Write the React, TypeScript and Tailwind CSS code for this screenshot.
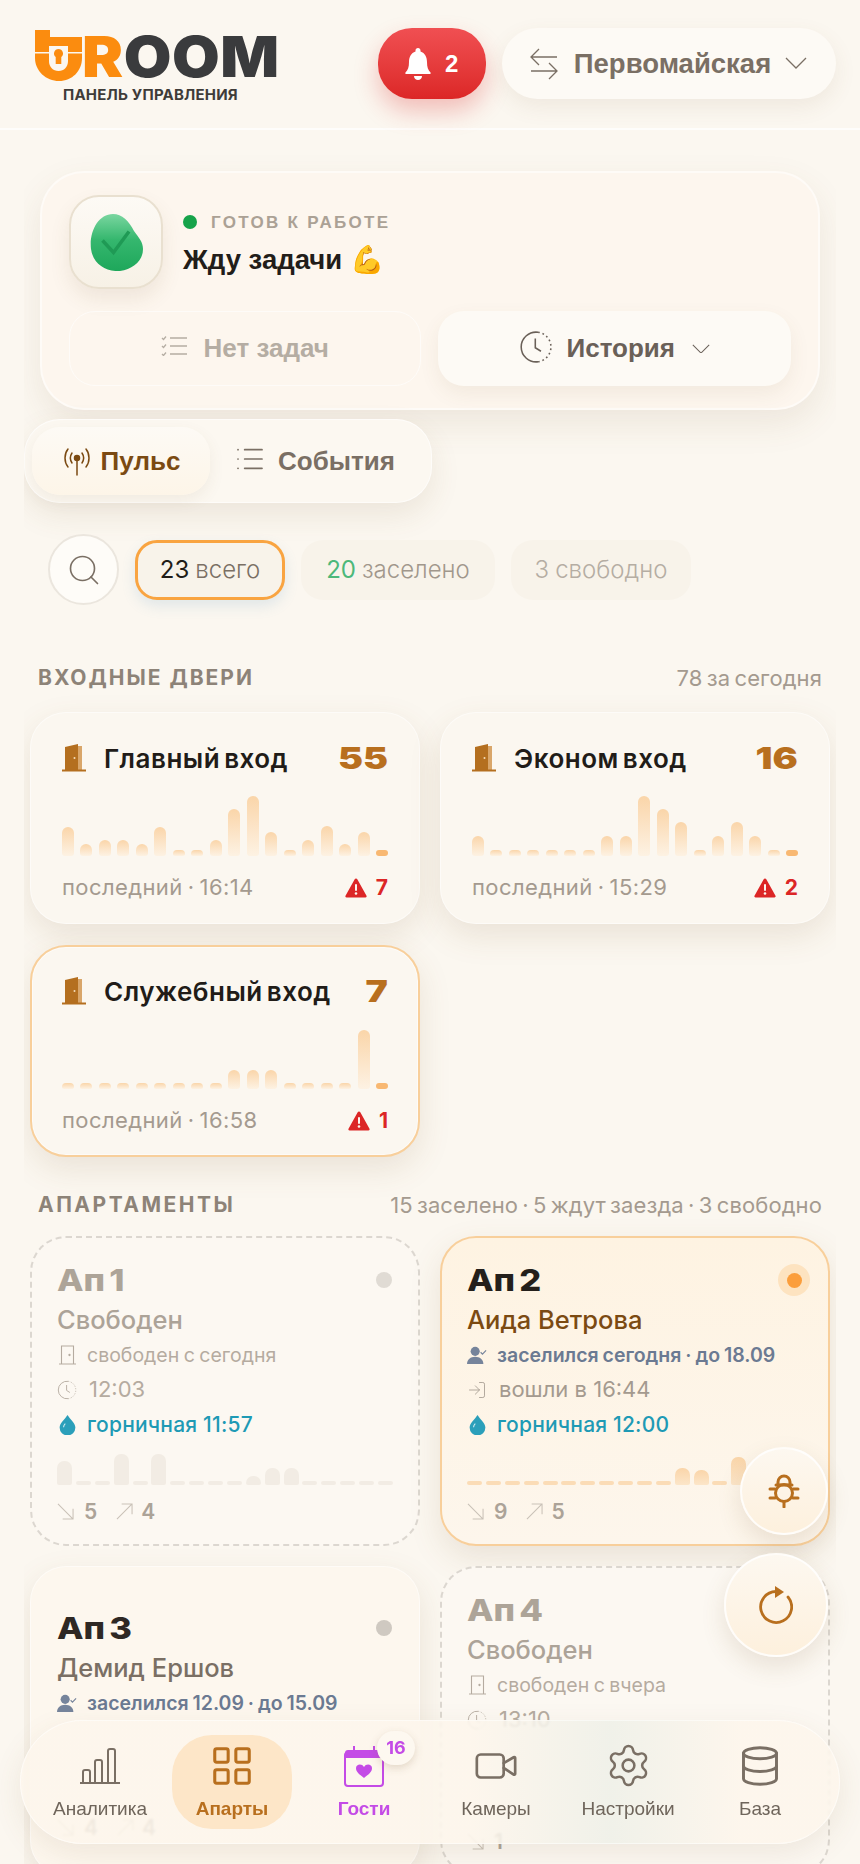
import { ReactNode } from 'react'
import { Database, LayoutGrid, List, LogIn, Search, Settings, Video } from 'lucide-react'

const CARD_SHADOW = 'shadow-[0_12px_32px_rgba(120,90,50,0.13),inset_0_0_0_1px_rgba(255,255,255,0.5)]'

function Logo() {
  return (
    <div className="flex flex-col">
      <div className="flex h-[52px] items-end">
        <svg width="47" height="51" viewBox="0 0 47 51" className="shrink-0">
          <path d="M0 0h15v7h32v15H0z" fill="#fb8c0f" />
          <path d="M0 23.500h47v4.500c0 13-10 23-23 23S0 41 0 28z" fill="#fb8c0f" />
          <path d="M14 16h19v15c0 6-4 10-9.500 10S14 37 14 31z" fill="#fbf7f0" />
          <path d="M23.500 19a4.500 4.500 0 0 1 2.800 8v7h-5.600v-7a4.500 4.500 0 0 1 2.800-8z" fill="#fb8c0f" />
        </svg>
        <span className="mb-[3px] inline-block h-[41px] origin-left scale-x-110 text-[56px] leading-[40px] font-black tracking-[0.5px] text-[#3a3b3d]">
          <span className="text-[#fb8c0f]">R</span>OOM
        </span>
      </div>
      <span className="mt-[6px] ml-[28px] text-[15px] leading-[16px] font-bold tracking-[0.2px] whitespace-nowrap text-[#3f3c39]">
        ПАНЕЛЬ УПРАВЛЕНИЯ
      </span>
    </div>
  )
}

function Chevron({ w, className }: { w: number; className?: string }) {
  return (
    <svg width={w} height={w * 0.55} viewBox="0 0 22 12" fill="none" stroke="currentColor" strokeWidth="1.300" className={className}>
      <path d="M1 1l10 10 10-10" />
    </svg>
  )
}

function ClockIcon({ size, className }: { size: number; className?: string }) {
  return (
    <svg width={size} height={size} viewBox="0 0 24 24" fill="none" stroke="currentColor" strokeWidth="1.100" className={className}>
      <path d="M13.500 1.600a10.500 10.500 0 1 0 0 20.800" />
      <path d="M13.500 1.600a10.500 10.500 0 0 1 0 20.800" strokeDasharray="1.200 2" />
      <path d="M11.500 6v6.500l4 2.500" />
    </svg>
  )
}

function DoorIcon() {
  return (
    <svg width="24" height="28" viewBox="0 0 24 28">
      <path d="M3 3l13-3v26H3z" fill="#b46f1f" />
      <path d="M16 2h4v24h-4z" fill="#d9a66a" />
      <path d="M0 25.500h24v2H0z" fill="#b46f1f" />
      <circle cx="12.500" cy="14" r="1" fill="#f4dcb8" />
    </svg>
  )
}

function WarnIcon() {
  return (
    <svg width="22" height="20" viewBox="0 0 22 20">
      <path d="M11 .5c.6 0 1 .3 1.300.8l9.200 16.500c.4.800-.1 1.700-1 1.700h-19c-.9 0-1.400-.9-1-1.700L9.700 1.300c.3-.5.700-.8 1.300-.8z" fill="#dc2626" />
      <rect x="10" y="6" width="2" height="7" rx="1" fill="#fbf7f0" />
      <circle cx="11" cy="15.500" r="1.300" fill="#fbf7f0" />
    </svg>
  )
}

function DoorCard({
  name,
  count,
  time,
  alerts,
  bars,
  hot
}: {
  name: string
  count: number
  time: string
  alerts: number
  bars: number[]
  hot?: boolean
}) {
  return (
    <div
      className={`h-[212px] rounded-[36px] bg-[#fbf7f0] ${CARD_SHADOW} ${hot ? 'border-2 border-[#f8cf9b] px-[30px] pt-[26px]' : 'px-[32px] pt-[28px]'}`}
    >
      <div className="flex h-[36px] items-center">
        <DoorIcon />
        <span className="ml-[18px] text-[26px] font-semibold tracking-[0.5px] [word-spacing:-3px] text-[#211c18] whitespace-nowrap">{name}</span>
        <span className="ml-auto origin-right scale-x-125 text-[30px] font-black text-[#b86f1e]">{count}</span>
      </div>
      <div className="mt-[20px] flex h-[60px] items-end justify-between">
        {bars.map((h, i) => (
          <div
            key={i}
            className={
              i === bars.length - 1
                ? 'w-[12px] rounded-[4px] bg-[#f8b872]'
                : 'w-[12px] rounded-t-[6px] rounded-b-[3px] bg-gradient-to-b from-[#fad5a9] to-[#fdf2e3]'
            }
            style={{ height: h }}
          />
        ))}
      </div>
      <div className="mt-[15px] flex items-center">
        <span className="text-[22px] tracking-[0.4px] [word-spacing:-1.5px] text-[#a49a8f]">последний · {time}</span>
        <span className="ml-auto flex items-center gap-[9px] text-[21px] font-bold text-[#dc2626]">
          <WarnIcon />
          {alerts}
        </span>
      </div>
    </div>
  )
}

function UserCheckIcon() {
  return (
    <svg width="22" height="20" viewBox="0 0 22 20">
      <circle cx="9" cy="6" r="5" fill="#76849b" />
      <path d="M0 20c0-5 4-8 9-8s9 3 9 8z" fill="#76849b" />
      <path d="M15 7l2 2 4-4" fill="none" stroke="#76849b" strokeWidth="1.300" />
    </svg>
  )
}

function Drop() {
  return (
    <svg width="17" height="21" viewBox="0 0 19 24">
      <path d="M9.500 1c3 5 9 9 9 14.500a9 9 0 0 1-18 0c0-5.500 6-9.500 9-14.500z" fill="#2b9fba" />
      <path d="M5 15c0-2 1-3 2-4" fill="none" stroke="#d6eef3" strokeWidth="1.200" />
    </svg>
  )
}

function ThinDoor() {
  return (
    <svg width="17" height="20" viewBox="0 0 17 20" fill="none" stroke="#b5aba0" strokeWidth="1.100">
      <path d="M2.500 19V1h12v18M0 19h17" />
      <circle cx="10.500" cy="10" r=".6" fill="#b5aba0" />
    </svg>
  )
}

function ArrowIn() {
  return (
    <svg width="17" height="17" viewBox="0 0 18 18" fill="none" stroke="#c9c1b7" strokeWidth="1.100">
      <path d="M1 1l16 16M17 6v11H6" />
    </svg>
  )
}

function ArrowOut() {
  return (
    <svg width="17" height="17" viewBox="0 0 18 18" fill="none" stroke="#c9c1b7" strokeWidth="1.100">
      <path d="M1 17L17 1M6 1h11v11" />
    </svg>
  )
}

function ApartBars({ bars, faded }: { bars: number[]; faded?: boolean }) {
  return (
    <div className="flex h-[36px] items-end justify-between">
      {bars.map((h, i) => (
        <div
          key={i}
          className={`w-[15px] ${h > 4 ? 'rounded-t-[7px] rounded-b-[2px]' : 'rounded-[2px]'} ${faded ? 'bg-[#f2ece4]' : h > 4 ? 'bg-gradient-to-b from-[#fad5a9] to-[#fce6c9]' : 'bg-[#fbdcb6]'}`}
          style={{ height: h }}
        />
      ))}
    </div>
  )
}

function ApartCard({
  title,
  name,
  free,
  hot,
  className,
  children,
  bars,
  inCount,
  outCount
}: {
  title: string
  name: string
  free?: boolean
  hot?: boolean
  className?: string
  children: ReactNode
  bars?: number[]
  inCount: number
  outCount?: number
}) {
  return (
    <div
      className={`relative h-[310px] rounded-[36px] pt-[24px] ${free ? 'border-2 border-dashed border-[#dcd7d0] bg-[#fcf8f2] px-[25px]' : hot ? 'border-2 border-[#f8cf9b] bg-gradient-to-b from-[#fef3e2] to-[#fdf6ec] px-[25px] shadow-[0_12px_32px_rgba(120,90,50,0.13)]' : `bg-[#fdf7ee] px-[27px] ${CARD_SHADOW}`} ${className ?? ''}`}
    >
      <div className="flex h-[36px] items-center">
        <span className={`origin-left scale-x-115 text-[30px] font-extrabold [word-spacing:-3px] ${free ? 'text-[#ada498]' : hot ? 'text-[#241f1b]' : 'text-[#2e2824]'}`}>
          {title}
        </span>
        {hot ? (
          <span className="ml-auto mr-[-7px] flex h-[32px] w-[32px] items-center justify-center rounded-full bg-[#fde3c0]">
            <span className="h-[15px] w-[15px] rounded-full bg-[#fb9e3c]" />
          </span>
        ) : (
          <span className={`ml-auto mr-[1px] h-[16px] w-[16px] rounded-full ${free ? 'bg-[#e0dbd4]' : 'bg-[#cfc9c1]'}`} />
        )}
      </div>
      <div className={`mt-[4px] text-[25.500px] leading-[36px] font-medium ${free ? 'text-[#aca398]' : hot ? 'text-[#7b4a12]' : 'text-[#7a6f64]'}`}>
        {name}
      </div>
      {children}
      {bars && (
        <div className="mt-[7px]">
          <ApartBars bars={bars} faded={free} />
        </div>
      )}
      <div className="mt-[11px] flex items-center text-[21px] font-semibold text-[#aca398]">
        <ArrowIn />
        <span className="ml-[10px]">{inCount}</span>
        {outCount !== undefined && (
          <>
            <span className="ml-[19px]">
              <ArrowOut />
            </span>
            <span className="ml-[8px]">{outCount}</span>
          </>
        )}
      </div>
    </div>
  )
}

function InfoRow({ icon, children, className }: { icon: ReactNode; children: ReactNode; className: string }) {
  return (
    <div className={`flex h-[34.500px] items-center gap-[10px] ${className}`}>
      <span className="flex w-[20px] justify-center">{icon}</span>
      {children}
    </div>
  )
}

function NavItem({ icon, label, className }: { icon: ReactNode; label: string; className: string }) {
  return (
    <div className={`flex w-[120px] flex-col items-center font-['Liberation_Sans',sans-serif] ${className}`}>
      <span className="flex h-[44px] items-center">{icon}</span>
      <span className="mt-[9px] text-[19px] leading-[24px] whitespace-nowrap">{label}</span>
    </div>
  )
}

const D = 4
const mainBars = [29, 12, 16, 16, 12, 29, 6, 6, 16, 47, 60, 24, 6, 16, 30, 12, 24, 6]
const economyBars = [20, 6, 6, 6, 6, 6, 6, 20, 20, 60, 47, 34, 6, 20, 34, 20, 6, 6]
const serviceBars = [6, 6, 6, 6, 6, 6, 6, 6, 6, 19, 19, 19, 6, 6, 6, 6, 59, 6]
const ap1Bars = [24, D, D, 31, D, 31, D, D, D, D, 9, 17, 17, D, D, D, D, D]
const ap2Bars = [D, D, D, D, D, D, D, D, D, D, D, 17, 15, D, 28, D, D, D]

export default function App() {
  return (
    <div className="relative h-[1864px] w-[860px] overflow-hidden bg-[#fbf7f0] font-['Inter',sans-serif]">
      <header className="flex h-[130px] items-start border-b-2 border-white/70 px-[35px] pt-[29px]">
        <Logo />
        <div className="ml-[116px] mt-[-1px] flex h-[71px] w-[108px] shrink-0 items-center justify-center gap-[14px] rounded-[34px] bg-gradient-to-b from-[#f04f52] to-[#dc2626] shadow-[0_12px_24px_rgba(220,38,38,0.28)]">
          <svg width="26" height="32" viewBox="0 0 26 32" fill="#fff">
            <path d="M13 0c1.500 0 2.500 1 2.500 2.500v1C20 5 22 9 22 14c0 5 1 8 3.500 10.500.5.500.2 1.500-.5 1.500H1c-.7 0-1-1-.5-1.500C3 22 4 19 4 14c0-5 2-9 6.500-10.500v-1C10.500 1 11.500 0 13 0z" />
            <path d="M9 28h8c0 2.500-2 4-4 4s-4-1.500-4-4z" />
          </svg>
          <span className="text-[24px] font-bold text-white font-['Liberation_Sans',sans-serif]">2</span>
        </div>
        <div className="ml-[16px] mt-[-1px] flex h-[71px] w-[334px] shrink-0 items-center rounded-[36px] bg-[#fdfaf5] pl-[28px] text-[#7a6f64] shadow-[0_8px_22px_rgba(120,90,50,0.09)] font-['Liberation_Sans',sans-serif]">
          <svg width="28" height="32" viewBox="0 0 28 32" fill="none" stroke="currentColor" strokeWidth="1.300">
            <path d="M9 1L1 9l8 8M1 9h26M19 15l8 8-8 8M27 23H1" />
          </svg>
          <span className="ml-[16px] text-[27.500px] font-bold whitespace-nowrap">Первомайская</span>
          <Chevron w={22} className="ml-[14px]" />
        </div>
      </header>

      <main className="mx-[24px] h-[1734px] overflow-hidden px-[6px] pt-[41px]">
        <section className="mx-[10px] h-[239px] rounded-[44px] bg-[#fdf6ee] px-[29px] pt-[24px] shadow-[0_14px_34px_rgba(120,90,50,0.1),inset_0_0_0_2px_rgba(255,255,255,0.5)]">
          <div className="flex items-center">
            <div className="flex h-[94px] w-[94px] items-center justify-center rounded-[30px] border-2 border-[#e9e0d0] bg-gradient-to-b from-[#fdfaf5] to-[#f7f1e6] shadow-[0_10px_20px_rgba(120,90,50,0.1)]">
              <svg width="53" height="57" viewBox="0 0 53 57">
                <defs>
                  <linearGradient id="egg" x1="0" y1="0" x2="0" y2="1">
                    <stop offset="0" stopColor="#7ad6a0" />
                    <stop offset="0.45" stopColor="#35b76e" />
                    <stop offset="1" stopColor="#1ea75b" />
                  </linearGradient>
                </defs>
                <path d="M23 0C32 0 39 7 44 17 49 24 53 28 53 35 53 47 43 55 30 57 16 58 3 50 1 35-1 18 8 0 23 0z" fill="url(#egg)" />
                <path d="M12.500 26.500l11 12 15.500-21" fill="none" stroke="#1f9a55" strokeWidth="3.500" />
              </svg>
            </div>
            <div className="ml-[20px] pt-[2px]">
              <div className="flex items-center gap-[14px] pt-[4px] text-[17px] font-bold tracking-[2.3px] text-[#aba195] font-['Liberation_Sans',sans-serif]">
                <span className="h-[14px] w-[14px] rounded-full bg-[#16a34a]" />
                ГОТОВ К РАБОТЕ
              </div>
              <div className="mt-[4px] text-[27.500px] font-bold text-[#221d19] font-['Liberation_Sans',sans-serif]">Жду задачи 💪</div>
            </div>
          </div>
          <div className="mt-[22px] flex gap-[17px] font-['Liberation_Sans',sans-serif]">
            <div className="flex h-[75px] w-[352px] items-center justify-center gap-[17px] rounded-[26px] border border-white/60 text-[26px] font-bold text-[#b5ada3]">
              <svg width="26" height="20" viewBox="0 0 26 20" fill="none" stroke="currentColor" strokeWidth="1.300" className="mb-[6px]">
                <path d="M9 2h17M9 10h17M9 18h17M1 2l1.500 1.500L5 0.500M1 10l1.500 1.500L5 8.500M1 18l1.500 1.500L5 16.500" />
              </svg>
              Нет задач
            </div>
            <div className="flex h-[75px] w-[354px] items-center justify-center rounded-[26px] bg-[#fdfaf5] text-[26px] font-bold text-[#6a6058] shadow-[0_8px_20px_rgba(120,90,50,0.08)]">
              <ClockIcon size={34} className="mb-[4px]" />
              <span className="ml-[14px]">История</span>
              <Chevron w={18} className="ml-[17px]" />
            </div>
          </div>
        </section>

        <div className="ml-[-6px] mt-[9px] flex h-[84px] w-[408px] items-center rounded-[36px] bg-[#fcf8f1] px-[8px] shadow-[0_12px_30px_rgba(120,90,50,0.11),inset_0_0_0_1px_rgba(255,255,255,0.6)] font-['Liberation_Sans',sans-serif] text-[26px] font-bold">
          <div className="flex h-[68px] w-[178px] items-center justify-center gap-[9px] rounded-[28px] bg-gradient-to-b from-[#fdfaf5] to-[#fdf5e8] text-[#7b4a12] shadow-[0_6px_16px_rgba(120,90,50,0.08)]">
            <svg width="30" height="32" viewBox="0 0 30 32" fill="none" stroke="#7b4a12" strokeWidth="1.500" strokeLinecap="round">
              <path d="M6 4c-4 5-4 13 0 18M24 4c4 5 4 13 0 18M10 8c-2 3-2 7 0 10M20 8c2 3 2 7 0 10M15 14v16" />
              <circle cx="15" cy="13" r="2.500" fill="#7b4a12" />
            </svg>
            Пульс
          </div>
          <div className="ml-[24px] flex items-center gap-[12px] text-[#7a6f64]">
            <List size={32} strokeWidth={1.300} className="mb-[4px]" />
            События
          </div>
        </div>

        <div className="ml-[18px] mt-[31px] flex items-center">
          <div className="flex h-[71px] w-[71px] items-center justify-center rounded-full border-2 border-[#ebe6de] bg-[#fefcf8]">
            <Search size={36} strokeWidth={1.100} className="text-[#7a6f64]" />
          </div>
          <div className="ml-[16px] flex h-[60px] w-[150px] items-center justify-center rounded-[22px] border-[3px] border-[#f9a441] bg-[#f8f3ea] text-[24px] font-light text-[#7a6f64] shadow-[0_6px_14px_rgba(90,150,190,0.16)]">
            <span className="mr-[6px] font-normal text-[#211c18]">23</span>всего
          </div>
          <div className="ml-[16px] flex h-[60px] w-[194px] items-center justify-center rounded-[22px] bg-[#f8f3ea] text-[24px] font-light text-[#a1978c]">
            <span className="mr-[6px] font-normal text-[#4cb87a]">20</span>заселено
          </div>
          <div className="ml-[16px] flex h-[60px] w-[180px] items-center justify-center rounded-[22px] bg-[#f8f3ea] text-[24px] font-light text-[#b5ada3]">
            <span className="mr-[6px]">3</span>свободно
          </div>
        </div>

        <div className="mx-[8px] mt-[53px] flex h-[40px] items-center justify-between">
          <span className="text-[21px] font-bold tracking-[2px] text-[#8d8378]">ВХОДНЫЕ ДВЕРИ</span>
          <span className="text-[22px] tracking-[0.1px] [word-spacing:-2px] text-[#a49a8f]">78 за сегодня</span>
        </div>

        <div className="mt-[14px] grid grid-cols-2 gap-x-[20px] gap-y-[21px]">
          <DoorCard name="Главный вход" count={55} time="16:14" alerts={7} bars={mainBars} />
          <DoorCard name="Эконом вход" count={16} time="15:29" alerts={2} bars={economyBars} />
          <DoorCard name="Служебный вход" count={7} time="16:58" alerts={1} bars={serviceBars} hot />
        </div>

        <div className="mx-[8px] mt-[28px] flex h-[40px] items-center justify-between">
          <span className="text-[21px] font-bold tracking-[2.500px] text-[#8d8378]">АПАРТАМЕНТЫ</span>
          <span className="text-[22px] tracking-[0.1px] [word-spacing:-2px] text-[#a49a8f]">15 заселено · 5 ждут заезда · 3 свободно</span>
        </div>

        <div className="mt-[11px] grid grid-cols-2 gap-x-[20px] gap-y-[20px]">
          <ApartCard title="Ап 1" name="Свободен" free bars={ap1Bars} inCount={5} outCount={4}>
            <InfoRow icon={<ThinDoor />} className="text-[19.500px] [word-spacing:-1px] text-[#b5aba0]">
              свободен с сегодня
            </InfoRow>
            <InfoRow icon={<ClockIcon size={26} />} className="text-[22px] text-[#b5aba0]">
              <span className="ml-[2px]">12:03</span>
            </InfoRow>
            <InfoRow icon={<Drop />} className="text-[21px] font-medium tracking-[0.2px] text-[#1e9ab5]">
              горничная 11:57
            </InfoRow>
          </ApartCard>
          <ApartCard title="Ап 2" name="Аида Ветрова" hot bars={ap2Bars} inCount={9} outCount={5}>
            <InfoRow icon={<UserCheckIcon />} className="text-[19.500px] font-semibold [word-spacing:-1px] text-[#6b7a92]">
              заселился сегодня · до 18.09
            </InfoRow>
            <InfoRow icon={<LogIn size={24} strokeWidth={1} />} className="text-[22px] text-[#a49a8f]">
              <span className="ml-[2px]">вошли в 16:44</span>
            </InfoRow>
            <InfoRow icon={<Drop />} className="text-[21px] font-medium tracking-[0.2px] text-[#1e9ab5]">
              горничная 12:00
            </InfoRow>
          </ApartCard>
          <ApartCard title="Ап 3" name="Демид Ершов" className="pt-[44px]" inCount={4} outCount={4}>
            <InfoRow icon={<UserCheckIcon />} className="text-[19.500px] font-semibold [word-spacing:-1px] text-[#6b7a92]">
              заселился 12.09 · до 15.09
            </InfoRow>
            <div className="h-[80px]" />
          </ApartCard>
          <ApartCard title="Ап 4" name="Свободен" free inCount={1}>
            <InfoRow icon={<ThinDoor />} className="text-[19.500px] [word-spacing:-1px] text-[#b5aba0]">
              свободен с вчера
            </InfoRow>
            <InfoRow icon={<ClockIcon size={26} />} className="text-[22px] text-[#b5aba0]">
              <span className="ml-[2px]">13:10</span>
            </InfoRow>
            <div className="h-[78px]" />
          </ApartCard>
        </div>
      </main>

      <button className="absolute left-[740px] top-[1447px] flex h-[88px] w-[88px] items-center justify-center rounded-full border-2 border-white/80 bg-gradient-to-b from-[#fdf8f0] to-[#fdf0dd] shadow-[0_10px_24px_rgba(120,90,50,0.14)]">
        <svg width="32" height="34" viewBox="0 0 32 34" fill="none" stroke="#b86f1e" strokeWidth="3" strokeLinecap="round">
          <path d="M10 11V8a6 6 0 0 1 12 0v3M8 11h16" />
          <circle cx="16" cy="19" r="8.500" />
          <path d="M2 15h5M25 15h5M2 24h5M25 24h5M16 28v5" />
        </svg>
      </button>
      <button className="absolute left-[724px] top-[1553px] flex h-[104px] w-[104px] items-center justify-center rounded-full border-2 border-white/80 bg-gradient-to-b from-[#fdf8f0] to-[#fdf0dd] shadow-[0_10px_24px_rgba(120,90,50,0.14)]">
        <svg width="34" height="38" viewBox="0 0 34 38" fill="none">
          <path d="M17 5.500A15.500 15.500 0 1 0 29 11" stroke="#b86f1e" strokeWidth="2.800" strokeLinecap="round" />
          <path d="M16 0l9 6-9 6z" fill="#b86f1e" />
        </svg>
      </button>

      <nav className="absolute bottom-[20px] left-[20px] flex h-[124px] w-[820px] items-center justify-between rounded-[62px] bg-gradient-to-r from-[#fdf6ec]/85 from-55% via-[#eef0e8]/85 via-72% to-[#fdf6ec]/85 to-88% px-[20px] shadow-[0_10px_30px_rgba(120,90,50,0.1),inset_0_0_0_1px_rgba(255,255,255,0.5)] backdrop-blur-[1px]">
        <NavItem
          className="text-[#6f655b]"
          label="Аналитика"
          icon={
            <svg width="40" height="36" viewBox="0 0 40 36" fill="none" stroke="#7a6f64" strokeWidth="2">
              <path d="M0 35h40M3 34V24a2 2 0 0 1 2-2h3a2 2 0 0 1 2 2v10M15 34V14a2 2 0 0 1 2-2h3a2 2 0 0 1 2 2v20M28 34V3a2 2 0 0 1 2-2h3a2 2 0 0 1 2 2v31" />
            </svg>
          }
        />
        <div className="flex h-[94px] w-[120px] items-center justify-center rounded-[40px] bg-[#fde6c8]">
          <NavItem
            className="font-bold text-[#b86f1e]"
            label="Апарты"
            icon={<LayoutGrid size={46} strokeWidth={1.600} className="text-[#b86f1e]" />}
          />
        </div>
        <div className="relative">
          <NavItem
            className="font-bold text-[#c44be6]"
            label="Гости"
            icon={
              <svg width="40" height="42" viewBox="0 0 40 42">
                <path d="M3 8h34a2 2 0 0 1 2 2v28a3 3 0 0 1-3 3H4a3 3 0 0 1-3-3V10a2 2 0 0 1 2-2z" fill="#fdf7ee" stroke="#c44be6" strokeWidth="2" />
                <path d="M1 13V8a3 3 0 0 1 3-3h32a3 3 0 0 1 3 3v5z" fill="#c44be6" />
                <path d="M10 1v6M30 1v6" stroke="#c44be6" strokeWidth="2" />
                <path d="M20 33c-5-4-8-6-8-10 0-4 6-5 8-1 2-4 8-3 8 1 0 4-3 6-8 10z" fill="#c44be6" />
              </svg>
            }
          />
          <span className="absolute left-[73px] top-[-13px] flex h-[34px] w-[38px] items-center justify-center rounded-full bg-[#fdf8f0] text-[18px] font-bold text-[#c44be6] shadow-[0_3px_8px_rgba(120,90,50,0.2)]">
            16
          </span>
        </div>
        <NavItem className="text-[#6f655b]" label="Камеры" icon={<Video size={46} strokeWidth={1.400} className="text-[#7a6f64]" />} />
        <NavItem className="text-[#6f655b]" label="Настройки" icon={<Settings size={47} strokeWidth={1.300} className="text-[#7a6f64]" />} />
        <NavItem className="text-[#6f655b]" label="База" icon={<Database size={44} strokeWidth={1.600} className="text-[#7a6f64]" />} />
      </nav>
    </div>
  )
}
